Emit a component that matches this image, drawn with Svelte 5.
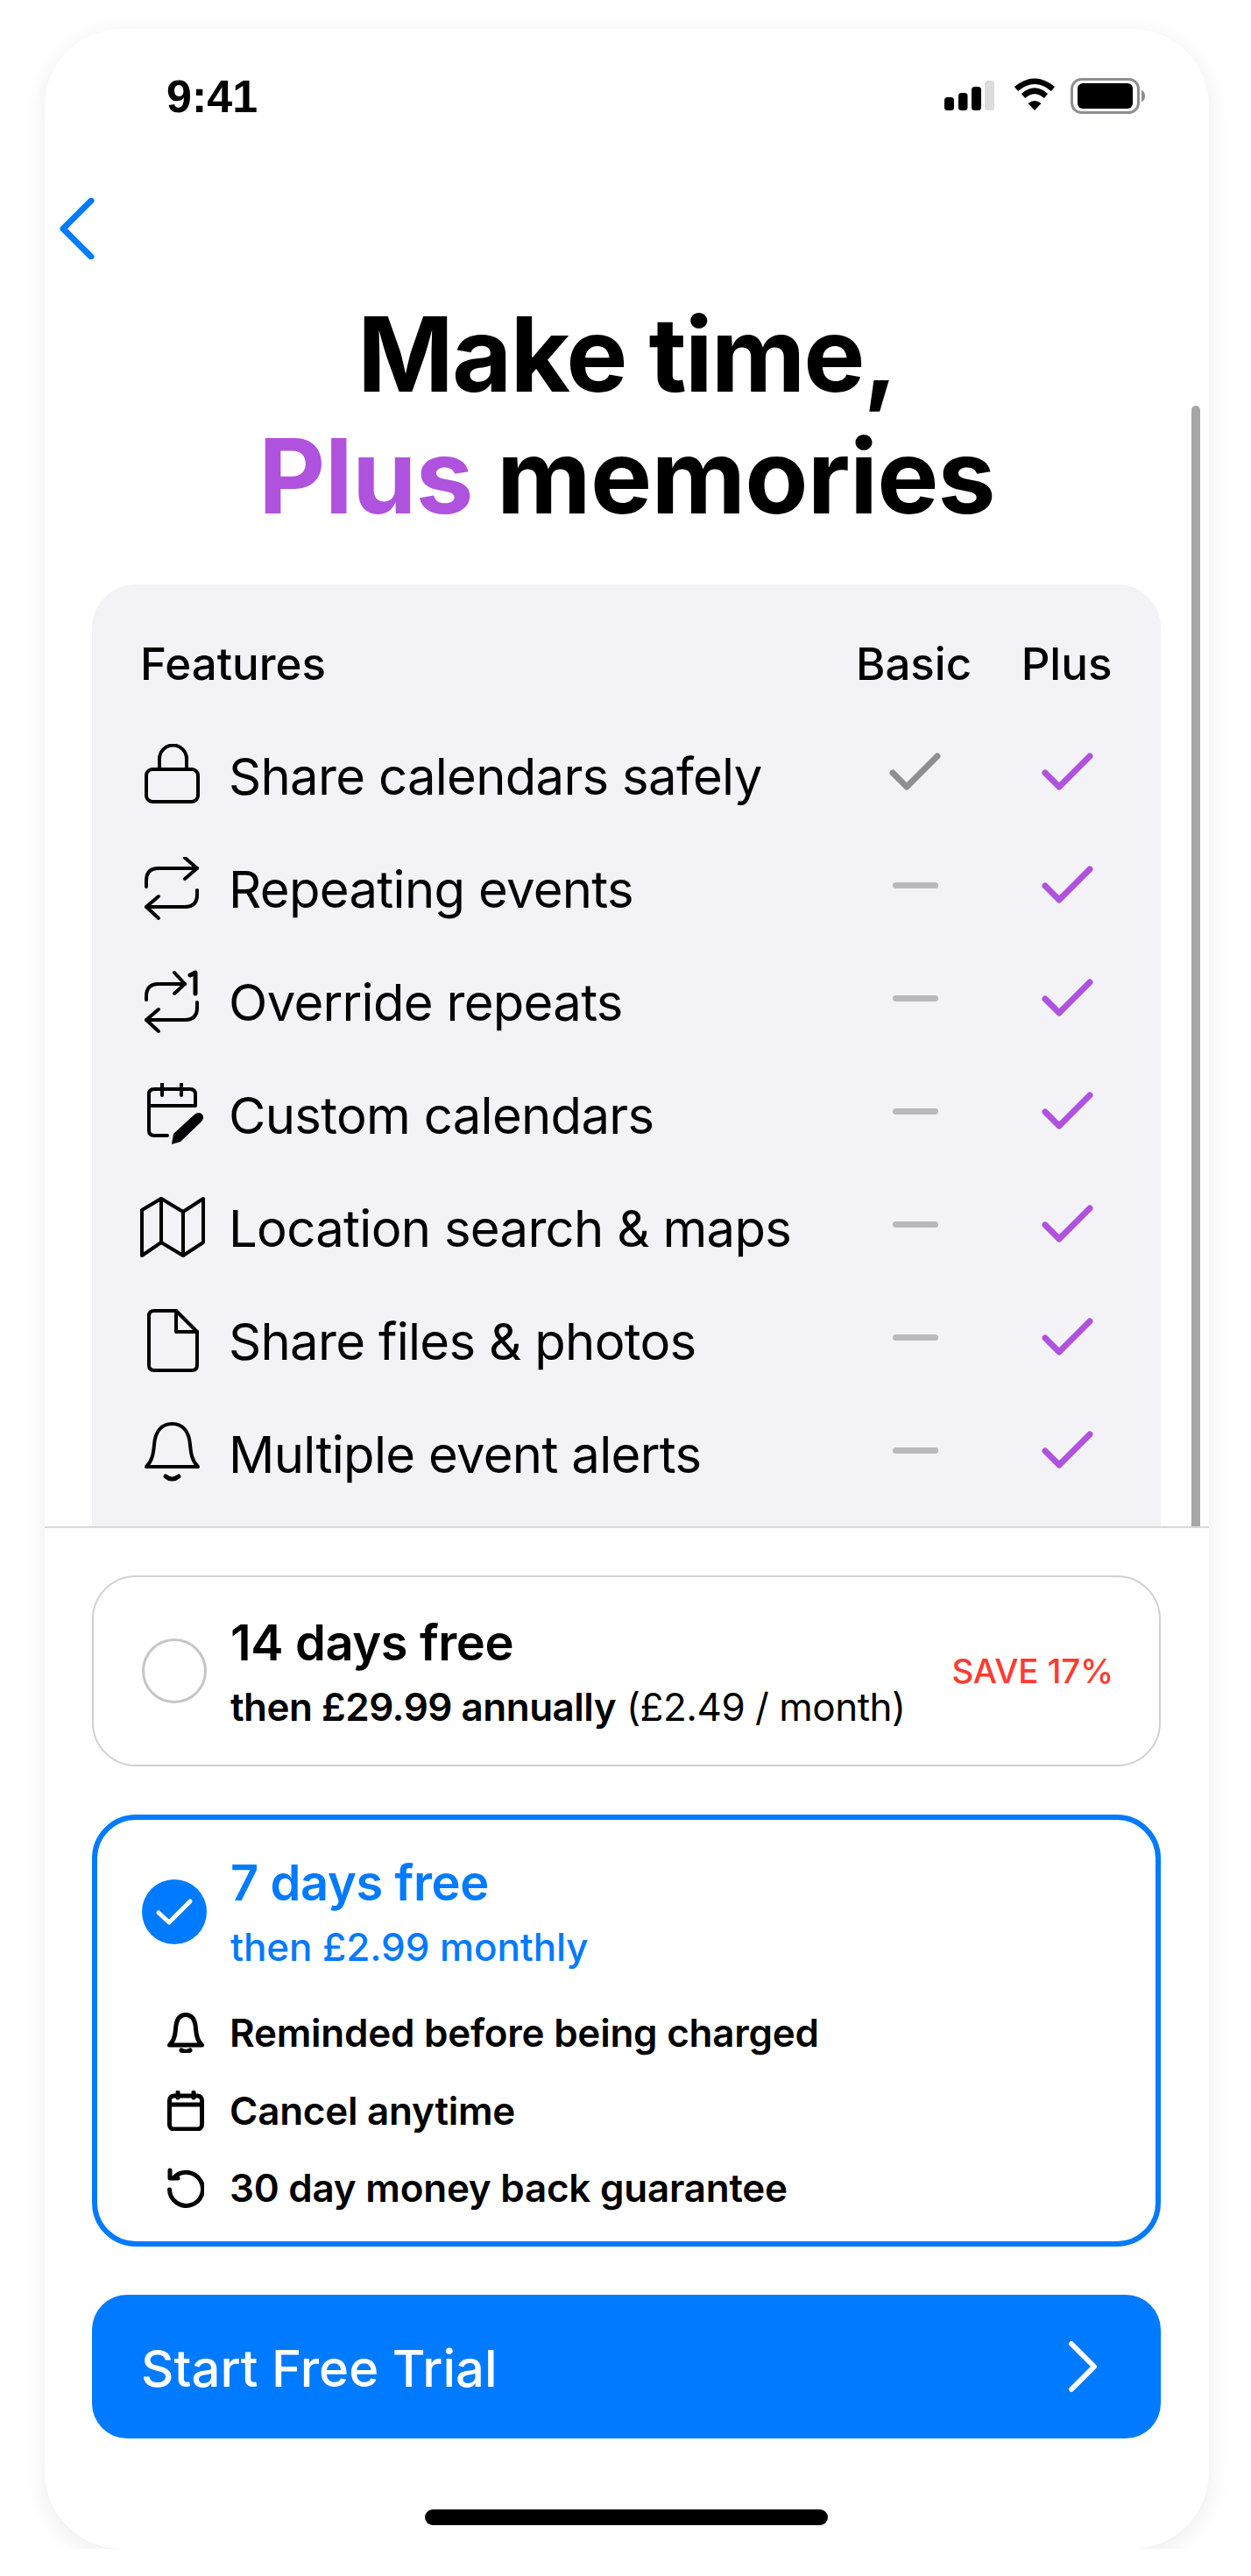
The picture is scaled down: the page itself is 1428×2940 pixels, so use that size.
<script>
  const rows = [
    { label: "Share calendars safely", icon: "lock", basic: true },
    { label: "Repeating events", icon: "repeat" },
    { label: "Override repeats", icon: "repeat1" },
    { label: "Custom calendars", icon: "calpen" },
    { label: "Location search & maps", icon: "map" },
    { label: "Share files & photos", icon: "file" },
    { label: "Multiple event alerts", icon: "bell" },
  ];

  const perks = [
    { label: "Reminded before being charged", icon: "bell" },
    { label: "Cancel anytime", icon: "cal" },
    { label: "30 day money back guarantee", icon: "undo" },
  ];
</script>

<div class="phone">
  <div class="top">
    <div class="status">
      <span class="time">9:41</span>
      <svg class="status-icons" width="230" height="42" viewBox="0 0 230 42">
        <rect x="0" y="22" width="11" height="15" rx="3.5" fill="#000" />
        <rect x="16" y="17" width="10.5" height="20" rx="3.5" fill="#000" />
        <rect x="31" y="10" width="11" height="27" rx="3.5" fill="#000" />
        <rect x="46" y="3" width="11" height="34" rx="3.5" fill="#dcdcdc" />
        <path d="M82 12.5Q103 -5 124 12.5" fill="none" stroke="#000" stroke-width="6.5" />
        <path d="M90 20.5Q103 9 116 20.5" fill="none" stroke="#000" stroke-width="6.5" />
        <path d="M95.500 29L103 37L110.500 29Q103 23 95.500 29Z" fill="#000" />
        <rect x="145.500" y="1.500" width="76" height="38" rx="11" fill="none" stroke="#8e8e93" stroke-width="3" />
        <rect x="152" y="6" width="63" height="29" rx="6" fill="#000" />
        <path d="M225 14Q229 15 229 20.500Q229 26 225 27Z" fill="#8e8e93" />
      </svg>
    </div>

    <div class="nav">
      <svg width="40" height="70" viewBox="0 0 40 70">
        <path d="M36 3L4 35L36 67" fill="none" stroke="#007aff" stroke-width="7" stroke-linecap="round" stroke-linejoin="round" />
      </svg>
    </div>

    <h1>Make time,<br /><span class="line2"><span class="plus">Plus</span> memories</span></h1>

    <div class="table">
      <div class="row head">
        <span class="name">Features</span>
        <span class="col">Basic</span>
        <span class="col">Plus</span>
      </div>
      {#each rows as r}
        <div class="row">
          <div class="feature">
            <svg class="ficon" width="74" height="74" viewBox="0 0 74 74">
              {#if r.icon === "lock"}
                <rect x="7" y="29" width="59" height="37" rx="7" />
                <path d="M22 29V17a15 15 0 0 1 31 0V29" />
              {:else if r.icon === "repeat"}
                <path d="M7 34V27Q7 13 21 13H65" />
                <path d="M51 1L65 13L51 25" />
                <path d="M65 38V43Q65 57 51 57H7" />
                <path d="M21 45L7 57L21 70" />
              {:else if r.icon === "repeat1"}
                <path d="M7 34V30Q7 16 21 16H51" />
                <path d="M39 3L51 16L39 27" />
                <path d="M65 37V43Q65 57 51 57H7" />
                <path d="M21 45L7 57L21 70" />
                <path d="M57 6L63 3V27" stroke-width="5" />
              {:else if r.icon === "calpen"}
                <path d="M31 60H16Q10 60 10 54V13Q10 7 16 7H57Q63 7 63 13V26H10" />
                <path d="M25 0V14M47 0V14" />
                <path class="solid" d="M36 70L38 58L62 36Q67 32 71 36Q74 41 69 45L46 67Z" />
              {:else if r.icon === "map"}
                <path d="M2 68V16L24 3L49 18L72 3V53L49 68L24 53Z" />
                <path d="M24 3V53M49 18V68" />
              {:else if r.icon === "file"}
                <path d="M10 8Q10 2 16 2H41L65 26V64Q65 70 59 70H16Q10 70 10 64Z" />
                <path d="M41 2V26H65" />
              {:else}
                <path d="M7 51C14 44 15 36 16 26C17 10 25 2 36.500 2C48 2 56 10 57 26C58 36 59 44 66 51Z" />
                <path d="M29 62Q36.500 68 44 62" stroke-width="5" />
              {/if}
            </svg>
            <span class="name">{r.label}</span>
          </div>
          <div class="col">
            {#if r.basic}
              <svg width="60" height="50" viewBox="0 0 60 50">
                <path d="M4 25L20 41L55 6" fill="none" stroke="#8e8e93" stroke-width="7" stroke-linecap="round" stroke-linejoin="round" />
              </svg>
            {:else}
              <span class="dash"></span>
            {/if}
          </div>
          <div class="col">
            <svg width="60" height="50" viewBox="0 0 60 50">
              <path d="M4 25L20 41L55 6" fill="none" stroke="#af52de" stroke-width="7" stroke-linecap="round" stroke-linejoin="round" />
            </svg>
          </div>
        </div>
      {/each}
    </div>

    <div class="scrollbar"></div>
  </div>

  <div class="bottom">
    <div class="plan">
      <span class="radio"></span>
      <div class="plan-text">
        <div class="plan-title">14 days free</div>
        <div class="plan-sub"><b>then £29.99 annually</b> (£2.49 / month)</div>
      </div>
      <span class="save">SAVE 17%</span>
    </div>

    <div class="plan selected">
      <div class="plan-main">
        <svg class="radio-on" width="74" height="74" viewBox="0 0 74 74">
          <circle cx="37" cy="37" r="37" fill="#007aff" />
          <path d="M19 38L31 49L55 25" fill="none" stroke="#fff" stroke-width="5" stroke-linecap="round" stroke-linejoin="round" />
        </svg>
        <div class="plan-text">
          <div class="plan-title">7 days free</div>
          <div class="plan-sub medium">then £2.99 monthly</div>
        </div>
      </div>
      <div class="perks">
        {#each perks as p}
          <div class="perk">
            <svg class="picon" width="42" height="46" viewBox="0 0 42 46">
              {#if p.icon === "bell"}
                <path d="M2.500 37C8 32 9 26 9.500 19C10 8 14 2.500 21 2.500C28 2.500 32 8 32.500 19C33 26 34 32 39.500 37Z" />
                <path d="M16 43Q21 46 26 43" />
              {:else if p.icon === "cal"}
                <rect x="2.500" y="6" width="37" height="38" rx="5" />
                <path d="M2.500 16H39.500M12 2V8M30 2V8" />
              {:else}
                <path d="M8 11A19 19 0 1 1 2.500 25" />
                <path d="M3 3V12H12" />
              {/if}
            </svg>
            <span>{p.label}</span>
          </div>
        {/each}
      </div>
    </div>

    <button class="cta">
      <span class="cta-label">Start Free Trial</span>
      <svg width="36" height="60" viewBox="0 0 36 60">
        <path d="M4 4L30 30L4 56" fill="none" stroke="#fff" stroke-width="6" stroke-linecap="round" stroke-linejoin="round" />
      </svg>
    </button>

    <div class="home"></div>
  </div>
</div>

<style>
  :global(body) {
    margin: 0;
    background: #fff;
  }
  .phone {
    position: relative;
    width: 1329px;
    height: 2876px;
    margin: 33px 0 0 51px;
    background: #fff;
    border-radius: 88px;
    box-shadow: 0 6px 28px rgba(0, 0, 0, 0.08);
    overflow: hidden;
    font-family: Inter, "Liberation Sans", sans-serif;
    color: #000;
    display: flex;
    flex-direction: column;
  }
  .top {
    height: 1709px;
    overflow: hidden;
    border-bottom: 2px solid #d9d9d9;
    flex: none;
  }
  .status {
    height: 154px;
    display: flex;
    align-items: center;
    justify-content: space-between;
    padding: 0 72px 0 139px;
  }
  .time {
    font-family: "Liberation Sans", sans-serif;
    font-size: 52px;
    font-weight: 700;
  }
  .nav {
    height: 148px;
    padding-left: 17px;
    display: flex;
    align-items: center;
  }
  .nav svg {
    display: block;
  }
  h1 {
    margin: 0;
    text-align: center;
    font-size: 118px;
    line-height: 139px;
    font-weight: 700;
    letter-spacing: -2px;
  }
  .line2 {
    letter-spacing: -0.8px;
  }
  .plus {
    color: #af52de;
  }
  .table {
    margin: 54px 55px 0 54px;
    padding: 27px 55px 0 55px;
    background: #f2f2f7;
    border-radius: 50px 50px 0 0;
    height: 1100px;
  }
  .row {
    height: 129px;
    display: grid;
    grid-template-columns: 1fr 130px 105px;
    column-gap: 57px;
    align-items: center;
  }
  .row.head {
    height: 127px;
    font-size: 51px;
    font-weight: 500;
  }
  .feature {
    display: flex;
    align-items: center;
    gap: 27px;
    font-size: 58px;
    letter-spacing: -0.7px;
    white-space: nowrap;
  }
  .ficon {
    flex: none;
    fill: none;
    stroke: #000;
    stroke-width: 4;
    stroke-linecap: round;
    stroke-linejoin: round;
  }
  .ficon .solid {
    fill: #000;
    stroke: none;
  }
  .col {
    display: flex;
    justify-content: center;
    align-items: center;
  }
  .row .col svg {
    display: block;
    margin: -8px 0 0 3px;
  }
  .dash {
    display: block;
    width: 52px;
    height: 7px;
    margin: -8px 0 0 3px;
    border-radius: 4px;
    background: #b8b8bd;
  }
  .scrollbar {
    position: absolute;
    top: 430px;
    left: 1309px;
    width: 10px;
    height: 1279px;
    border-radius: 5px 5px 0 0;
    background: #a6a6a6;
  }
  .bottom {
    flex: 1;
    padding: 54px 55px 0 54px;
    display: flex;
    flex-direction: column;
  }
  .plan {
    flex: none;
    box-sizing: border-box;
    height: 218px;
    border: 2px solid #d0d0d0;
    border-radius: 50px;
    padding: 0 52px 0 55px;
    display: flex;
    align-items: center;
    gap: 27px;
  }
  .radio {
    flex: none;
    box-sizing: border-box;
    width: 74px;
    height: 74px;
    border-radius: 50%;
    border: 3px solid #c6c6c8;
  }
  .plan-text {
    flex: 1;
    min-width: 0;
    padding-top: 8px;
  }
  .plan-title {
    font-size: 56px;
    line-height: 73px;
    font-weight: 600;
    letter-spacing: -0.4px;
  }
  .plan-sub {
    font-size: 44px;
    line-height: 72px;
    letter-spacing: -0.5px;
    white-space: nowrap;
  }
  .plan-sub b {
    font-weight: 600;
  }
  .plan-sub.medium {
    font-weight: 500;
    letter-spacing: -0.1px;
  }
  .save {
    flex: none;
    font-size: 38.5px;
    font-weight: 500;
    letter-spacing: -0.2px;
    color: #ff3b30;
  }
  .plan.selected {
    height: 493px;
    margin-top: 55px;
    border: 6px solid #007aff;
    display: block;
    padding: 36px 51px 0 51px;
    color: #007aff;
  }
  .plan-main {
    display: flex;
    align-items: center;
    gap: 27px;
  }
  .plan-main .plan-text {
    padding-top: 0;
  }
  .radio-on {
    flex: none;
    display: block;
    margin-top: -8px;
  }
  .perks {
    margin-top: 18px;
    padding-left: 29px;
    color: #000;
  }
  .perk {
    height: 88.5px;
    display: flex;
    align-items: center;
    gap: 29px;
    font-size: 44px;
    font-weight: 600;
    letter-spacing: -0.25px;
  }
  .picon {
    flex: none;
    fill: none;
    stroke: #000;
    stroke-width: 5;
    stroke-linecap: round;
    stroke-linejoin: round;
  }
  .cta {
    flex: none;
    box-sizing: border-box;
    width: 100%;
    height: 164px;
    margin-top: 55px;
    padding: 0 70px 0 56px;
    border: 0;
    border-radius: 40px;
    background: #007aff;
    color: #fff;
    font-family: inherit;
    font-size: 58px;
    font-weight: 500;
    display: flex;
    align-items: center;
    justify-content: space-between;
  }
  .cta-label {
    padding-top: 4px;
  }
  .home {
    flex: none;
    align-self: center;
    width: 460px;
    height: 18px;
    margin-top: 81px;
    border-radius: 9px;
    background: #000;
  }
</style>
